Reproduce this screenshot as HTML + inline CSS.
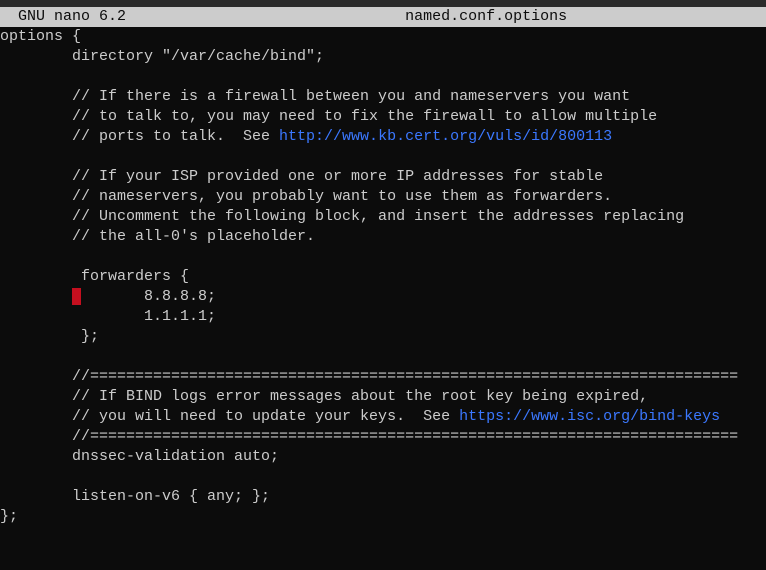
<!DOCTYPE html>
<html><head><style>
html,body{margin:0;padding:0;background:#0c0c0c;width:766px;height:570px;overflow:hidden}
.top{position:absolute;left:0;top:0;width:766px;height:7px;background:#2a2a2a}
.bar{position:absolute;left:0;top:7px;width:766px;height:20px;background:#cccccc}
pre{margin:0;font-family:"Liberation Mono",monospace;font-size:15px;line-height:20px;white-space:pre}
.bar pre{color:#0c0c0c}
.main{position:absolute;left:0;top:27px;color:#cccccc}
a{color:#3b78ff;text-decoration:none}
.cur{background:#c50f1f}
</style></head><body>
<div class="top"></div>
<div class="bar"><pre>  GNU nano 6.2                               named.conf.options</pre></div>
<div class="main"><pre>options {
        directory "/var/cache/bind";

        // If there is a firewall between you and nameservers you want
        // to talk to, you may need to fix the firewall to allow multiple
        // ports to talk.  See <a>http://www.kb.cert.org/vuls/id/800113</a>

        // If your ISP provided one or more IP addresses for stable
        // nameservers, you probably want to use them as forwarders.
        // Uncomment the following block, and insert the addresses replacing
        // the all-0's placeholder.

         forwarders {
        <span class="cur"> </span>       8.8.8.8;
                1.1.1.1;
         };

        //========================================================================
        // If BIND logs error messages about the root key being expired,
        // you will need to update your keys.  See <a>https://www.isc.org/bind-keys</a>
        //========================================================================
        dnssec-validation auto;

        listen-on-v6 { any; };
};</pre></div>
</body></html>
